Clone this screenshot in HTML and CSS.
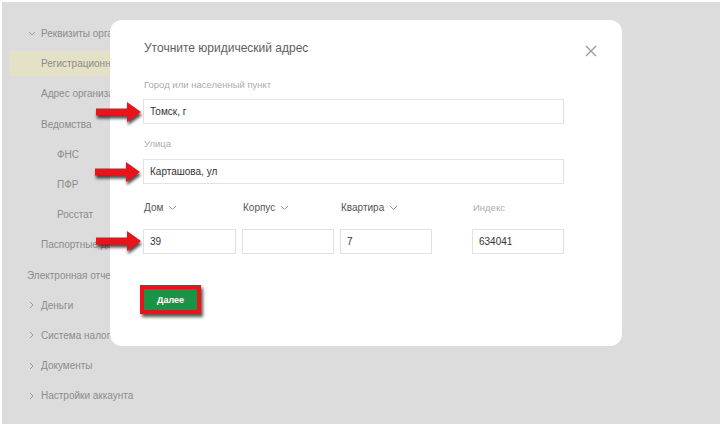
FILE: index.html
```html
<!DOCTYPE html>
<html lang="ru">
<head>
    <meta charset="UTF-8">
    <meta name="viewport" content="width=device-width, initial-scale=1.0">
    <title>Уточните юридический адрес</title>

    <link rel="stylesheet" href="styles.css">
</head>
<body>
    <div class="screen">
        <!-- Sidebar menu behind the dialog -->
        <ul class="menu">
            <li class="menu-item top">
                <svg class="chev" width="8" height="5" viewBox="0 0 8 5"><polyline points="1,1 4,4 7,1" /></svg>
                Реквизиты организации
            </li>
            <li class="menu-item lvl1 active">Регистрационные данные</li>
            <li class="menu-item lvl1">Адрес организации</li>
            <li class="menu-item lvl1">Ведомства</li>
            <li class="menu-item lvl2">ФНС</li>
            <li class="menu-item lvl2">ПФР</li>
            <li class="menu-item lvl2">Росстат</li>
            <li class="menu-item lvl1">Паспортные данные</li>
            <li class="menu-item root">Электронная отчетность</li>
            <li class="menu-item top">
                <svg class="chev" width="8" height="8" viewBox="0 0 8 8"><polyline points="2,1 5,4 2,7" /></svg>
                Деньги
            </li>
            <li class="menu-item top">
                <svg class="chev" width="8" height="8" viewBox="0 0 8 8"><polyline points="2,1 5,4 2,7" /></svg>
                Система налогообложения
            </li>
            <li class="menu-item top">
                <svg class="chev" width="8" height="8" viewBox="0 0 8 8"><polyline points="2,1 5,4 2,7" /></svg>
                Документы
            </li>
            <li class="menu-item top">
                <svg class="chev" width="8" height="8" viewBox="0 0 8 8"><polyline points="2,1 5,4 2,7" /></svg>
                Настройки аккаунта
            </li>
        </ul>

        <!-- Address dialog -->
        <div class="modal">
            <svg class="close" width="12" height="12" viewBox="0 0 12 12">
                <line x1="1" y1="1" x2="11" y2="11" />
                <line x1="11" y1="1" x2="1" y2="11" />
            </svg>

            <h2 class="modal-title">Уточните юридический адрес</h2>

            <div class="field first">
                <label>Город или населенный пункт</label>
                <div class="input">Томск, г</div>
            </div>

            <div class="field">
                <label>Улица</label>
                <div class="input">Карташова, ул</div>
            </div>

            <div class="field-row">
                <div class="cell">
                    <label class="dark">Дом <svg class="down" width="9" height="6" viewBox="0 0 9 6"><polyline points="1,1 4.5,4.5 8,1" /></svg></label>
                    <div class="input">39</div>
                </div>
                <div class="cell">
                    <label class="dark">Корпус <svg class="down" width="9" height="6" viewBox="0 0 9 6"><polyline points="1,1 4.5,4.5 8,1" /></svg></label>
                    <div class="input"></div>
                </div>
                <div class="cell">
                    <label class="dark">Квартира <svg class="down" width="9" height="6" viewBox="0 0 9 6"><polyline points="1,1 4.5,4.5 8,1" /></svg></label>
                    <div class="input">7</div>
                </div>
                <div class="cell index">
                    <label>Индекс</label>
                    <div class="input">634041</div>
                </div>
            </div>

            <button class="next-btn">Далее</button>
        </div>

        <!-- Red pointer arrows -->
        <svg class="arrow arrow-1" width="50" height="26" viewBox="0 0 50 26"><path d="M2 9.5 H33 V3 L47 13 L33 23 V16.5 H2 Z" /></svg>
        <svg class="arrow arrow-2" width="50" height="26" viewBox="0 0 50 26"><path d="M2 9.5 H33 V3 L47 13 L33 23 V16.5 H2 Z" /></svg>
        <svg class="arrow arrow-3" width="50" height="26" viewBox="0 0 50 26"><path d="M2 9.5 H33 V3 L47 13 L33 23 V16.5 H2 Z" /></svg>
    </div>
</body>
</html>
```

FILE: styles.css
```css
/* Page base */
body {
    margin: 0;
    padding: 0;
    background-color: #fff;
    font-family: "Liberation Sans", Arial, sans-serif;
}

/* Grey backdrop of the screenshot */
.screen {
    position: relative;
    margin: 2px 0 0 2px;
    height: 422px;
    background-color: #dcdcdc;
    overflow: hidden;
}

/* Sidebar menu */
.menu {
    list-style: none;
    margin: 0;
    padding: 19px 0 0 7px;
    width: 220px;
}

.menu-item {
    height: 25px;
    line-height: 25px;
    margin-bottom: 5.2px;
    font-size: 10px;
    color: #8c8c8c;
    white-space: nowrap;
    display: flex;
    align-items: center;
}

.menu-item.active {
    background-color: #e4e2c6;
}

.menu-item.top {
    padding-left: 19px;
}

.menu-item.lvl1 {
    padding-left: 32px;
}

.menu-item.lvl2 {
    padding-left: 48px;
}

.menu-item.root {
    padding-left: 18px;
}

.chev {
    width: 8px;
    margin-right: 5px;
    fill: none;
    stroke: #999;
    stroke-width: 1;
}

/* Dialog */
.modal {
    position: absolute;
    left: 108px;
    top: 18px;
    width: 512px;
    height: 326px;
    box-sizing: border-box;
    padding: 20px 58px 0 33px;
    background-color: #fff;
    border-radius: 12px;
}

.close {
    position: absolute;
    left: 475px;
    top: 25px;
    fill: none;
    stroke: #9a9a9a;
    stroke-width: 1.3;
}

.modal-title {
    margin: 0 0 0 1px;
    font-size: 12px;
    line-height: 16px;
    font-weight: normal;
    color: #5e5e5e;
}

/* Form fields */
.field {
    margin-top: 14px;
}

.field.first {
    margin-top: 23px;
}

.field label,
.cell label {
    display: block;
    margin-left: 1px;
    font-size: 9.5px;
    line-height: 12px;
    color: #acacac;
}

.cell label.dark {
    font-size: 10px;
    color: #555;
}

.down {
    margin-left: 2px;
    fill: none;
    stroke: #999;
    stroke-width: 1;
}

.input {
    box-sizing: border-box;
    height: 25px;
    margin-top: 8px;
    padding: 0 6px;
    border: 1px solid #e2e2e2;
    font-size: 10px;
    line-height: 23px;
    color: #333;
}

.field + .field .input {
    margin-top: 9px;
}

.field-row {
    display: grid;
    grid-template-columns: 93px 92px 92px 1fr;
    column-gap: 6px;
    margin-top: 18px;
}

.field-row .input {
    margin-top: 15px;
}

.cell.index {
    justify-self: end;
    width: 92px;
}

/* Next button with the red highlight frame */
.next-btn {
    display: block;
    margin: 31px 0 0 -3px;
    width: 61px;
    height: 29px;
    padding: 0;
    border: 4px solid #e8141a;
    background-color: #1b9347;
    color: #fff;
    font-family: "Liberation Sans", Arial, sans-serif;
    font-size: 9px;
    font-weight: bold;
    box-shadow: 2px 3px 3px rgba(0, 0, 0, 0.65);
}

/* Annotation arrows */
.arrow {
    position: absolute;
    fill: #e8141a;
    filter: drop-shadow(1px 3px 1.5px rgba(0, 0, 0, 0.7));
}

.arrow-1 {
    left: 92px;
    top: 97px;
}

.arrow-2 {
    left: 91px;
    top: 157px;
}

.arrow-3 {
    left: 92px;
    top: 226px;
}
```
